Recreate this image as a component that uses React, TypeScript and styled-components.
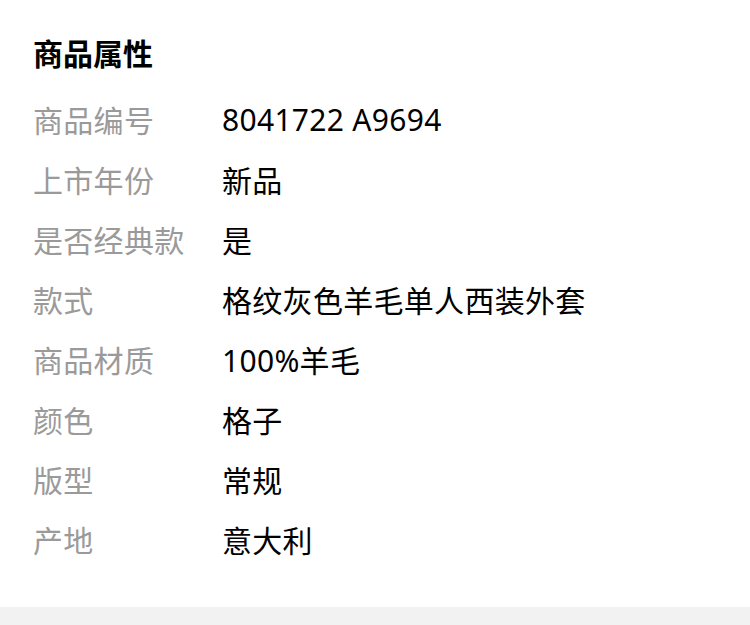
import React from 'react'
import styled, { createGlobalStyle } from 'styled-components'

const GlobalStyle = createGlobalStyle`
  html, body {
    margin: 0;
    padding: 0;
    background: #f2f2f2;
  }
  body {
    font-family: "Noto Sans", "Noto Sans CJK SC", sans-serif;
  }
`

const attrs = [
  { label: '商品编号', value: '8041722 A9694' },
  { label: '上市年份', value: '新品' },
  { label: '是否经典款', value: '是' },
  { label: '款式', value: '格纹灰色羊毛单人西装外套' },
  { label: '商品材质', value: '100%羊毛' },
  { label: '颜色', value: '格子' },
  { label: '版型', value: '常规' },
  { label: '产地', value: '意大利' },
]

const App = () => {
  return (
    <>
      <GlobalStyle />
      <Section>
        <Title>商品属性</Title>
        <AttrList>
          {attrs.map(({ label, value }) => (
            <AttrRow key={label}>
              <Label>{label}</Label>
              <Value>{value}</Value>
            </AttrRow>
          ))}
        </AttrList>
      </Section>
      <Footer />
    </>
  )
}

export default App

const Section = styled.div`
  background: #fff;
  padding: 24px 33px 38px;
`

const Title = styled.h3`
  margin: 0 0 5px;
  font-size: 30px;
  font-weight: 700;
  line-height: 60px;
  color: #000;
`

const AttrList = styled.div`
  display: flex;
  flex-direction: column;
`

const AttrRow = styled.div`
  display: flex;
  align-items: center;
  height: 60px;
  font-size: 30px;
  letter-spacing: 0.3px;
`

const Label = styled.span`
  width: 189px;
  flex-shrink: 0;
  color: #9a9a9a;
`

const Value = styled.span`
  color: #000;
`

const Footer = styled.div`
  height: 40px;
  background: #f2f2f2;
`
